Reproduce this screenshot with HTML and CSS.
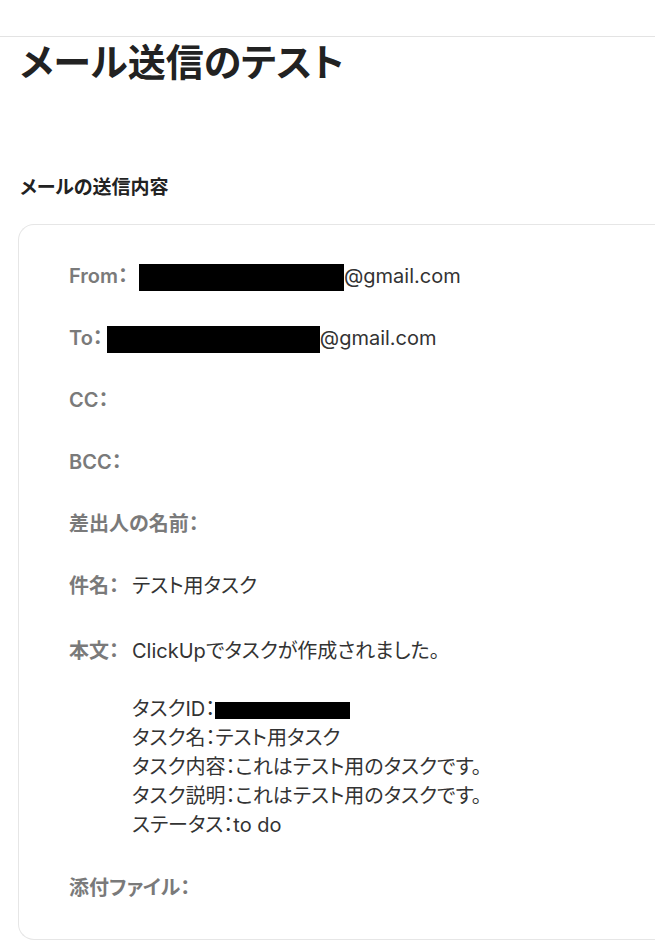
FILE: index.html
```html
<!DOCTYPE html>
<html lang="ja">
<head>
<meta charset="utf-8">
<title>メール送信のテスト</title>
<link rel="stylesheet" href="styles.css">
</head>
<body>
<div class="topbar"></div>
<h1 class="title">メール送信のテスト</h1>
<h2 class="subtitle">メールの送信内容</h2>
<div class="card">
  <div class="row"><span class="label">From：</span><span class="value from"><span class="redact r-from"></span>@gmail.com</span></div>
  <div class="row"><span class="label">To：</span><span class="value to"><span class="redact r-to"></span>@gmail.com</span></div>
  <div class="row"><span class="label">CC：</span></div>
  <div class="row"><span class="label">BCC：</span></div>
  <div class="row"><span class="label">差出人の名前：</span></div>
  <div class="row"><span class="label">件名：</span><span class="value">テスト用タスク</span></div>
  <div class="row body-row"><span class="label">本文：</span>
    <div class="value body">
      <div>ClickUpでタスクが作成されました。</div>
      <div class="blank"></div>
      <div>タスクID：<span class="redact r-id"></span></div>
      <div>タスク名：テスト用タスク</div>
      <div>タスク内容：これはテスト用のタスクです。</div>
      <div>タスク説明：これはテスト用のタスクです。</div>
      <div>ステータス：to do</div>
    </div>
  </div>
  <div class="row attach"><span class="label">添付ファイル：</span></div>
</div>
</body>
</html>
```

FILE: styles.css
```css
html, body {
  margin: 0;
  padding: 0;
  background: #ffffff;
}
body {
  font-family: "Inter", "Noto Sans CJK JP", sans-serif;
  font-feature-settings: "palt";
  color: #333333;
}
.topbar {
  height: 36px;
  border-bottom: 1px solid #e3e3e3;
}
.title {
  margin: 0;
  padding-left: 20px;
  font-size: 38px;
  line-height: 50px;
  font-weight: 700;
  color: #222222;
}
.subtitle {
  margin: 86px 0 0 0;
  padding-left: 20px;
  font-size: 19px;
  line-height: 29px;
  font-weight: 700;
  color: #222222;
}
.card {
  margin: 22px 0 0 18px;
  border: 1px solid #e6e6e6;
  border-right: none;
  border-radius: 16px 0 0 16px;
  padding: 37px 0 36px 50px;
  display: flex;
  flex-direction: column;
  gap: 33px;
}
.row {
  display: flex;
  align-items: flex-start;
  font-size: 20px;
  line-height: 29px;
}
.label {
  color: #7a7a7a;
  font-weight: 600;
  flex: none;
}
.value {
  color: #333333;
  margin-left: 13px;
}
.value.from { margin-left: 11px; }
.value.to { margin-left: 4px; }
.body-row { margin-top: 3px; }
.body .blank { height: 29px; }
.redact {
  display: inline-block;
  background: #000000;
  vertical-align: middle;
}
.r-from { width: 205px; height: 27px; }
.r-to { width: 213px; height: 27px; }
.r-id { width: 135px; height: 17px; }
.attach { margin-top: 1px; }
```
